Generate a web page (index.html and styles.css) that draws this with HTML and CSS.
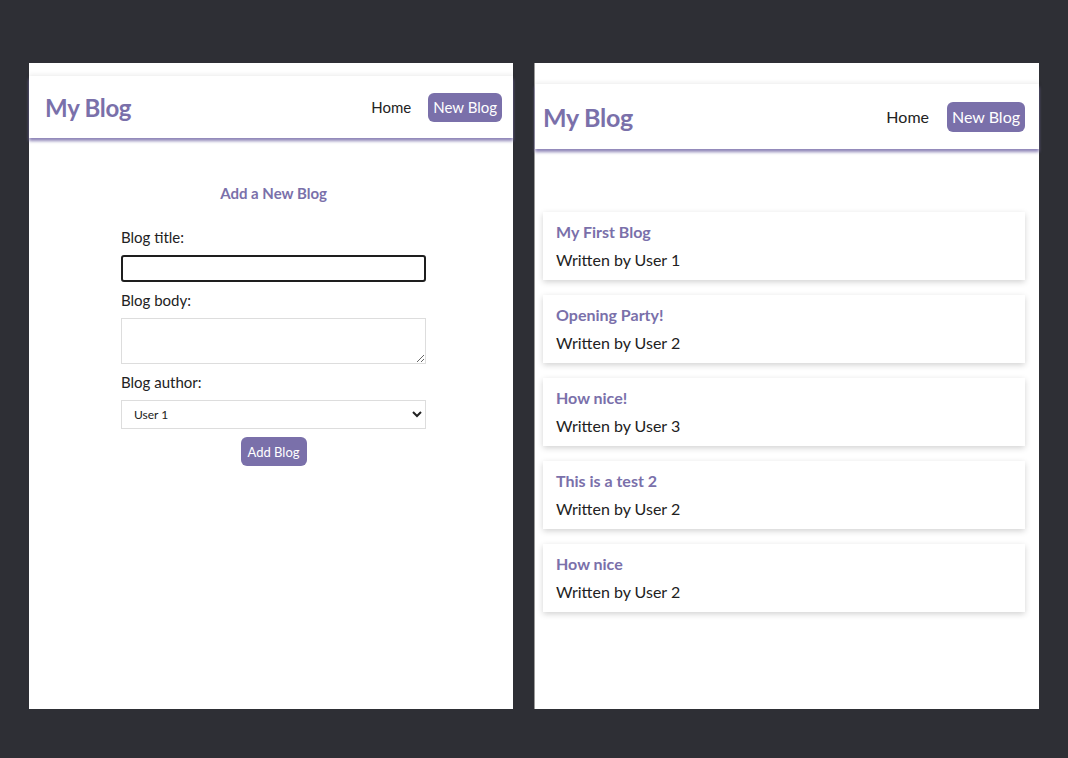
FILE: index.html
```html
<!DOCTYPE html>
<html lang="en">
<head>
<meta charset="utf-8">
<title>My Blog</title>
<link rel="stylesheet" href="styles.css">
</head>
<body>
<div class="stage">
  <section class="panel panel-left">
    <nav class="navbar navbar-sm">
      <h1 class="brand">My Blog</h1>
      <div class="links">
        <a class="link" href="#">Home</a>
        <a class="link link-btn" href="#">New Blog</a>
      </div>
    </nav>
    <div class="create">
      <h2 class="create-title">Add a New Blog</h2>
      <form class="form">
        <label class="label">Blog title:</label>
        <input class="field field-focus" type="text" autofocus>
        <label class="label">Blog body:</label>
        <textarea class="field field-area"></textarea>
        <label class="label">Blog author:</label>
        <select class="field field-select">
          <option>User 1</option>
          <option>User 2</option>
        </select>
        <button class="submit" type="button">Add Blog</button>
      </form>
    </div>
  </section>

  <section class="panel panel-right">
    <nav class="navbar navbar-lg">
      <h1 class="brand">My Blog</h1>
      <div class="links">
        <a class="link" href="#">Home</a>
        <a class="link link-btn" href="#">New Blog</a>
      </div>
    </nav>
    <div class="list">
      <article class="card"><h2 class="card-title">My First Blog</h2><p class="card-meta">Written by User 1</p></article>
      <article class="card"><h2 class="card-title">Opening Party!</h2><p class="card-meta">Written by User 2</p></article>
      <article class="card"><h2 class="card-title">How nice!</h2><p class="card-meta">Written by User 3</p></article>
      <article class="card"><h2 class="card-title">This is a test 2</h2><p class="card-meta">Written by User 2</p></article>
      <article class="card"><h2 class="card-title">How nice</h2><p class="card-meta">Written by User 2</p></article>
    </div>
  </section>
</div>
</body>
</html>
```

FILE: styles.css
```css
* { box-sizing: border-box; }

html, body {
  margin: 0;
  padding: 0;
}

body {
  background: #2e2f35;
  font-family: "Lato", "Open Sans", sans-serif;
  color: #222;
  width: 1068px;
  height: 758px;
  overflow: hidden;
}

.stage {
  display: flex;
  align-items: flex-start;
  padding: 63px 0 0 29px;
  gap: 21px;
}

.panel {
  background: #fff;
  height: 646px;
  display: flex;
  flex-direction: column;
}

.panel-left {
  width: 484px;
  padding-top: 13px;
}

.panel-right {
  width: 505px;
  padding: 21px 14px 0 8px;
  border-left: 1px solid #9a9a9a;
}

.navbar {
  display: flex;
  align-items: center;
  justify-content: space-between;
  background: #fff;
  box-shadow: 0 3px 3px rgba(122, 112, 170, 0.85), 0 -2px 4px rgba(0, 0, 0, 0.06);
}

.navbar-sm {
  height: 62px;
  padding: 0 11px 0 16px;
}

.navbar-lg {
  height: 65px;
  margin: 0 -14px 0 -8px;
  padding: 0 14px 0 8px;
}

.brand {
  margin: 0;
  color: #7a70aa;
  font-weight: 700;
  letter-spacing: -0.3px;
}

.navbar-sm .brand { font-size: 24px; }
.navbar-lg .brand { font-size: 25px; }

.links {
  display: flex;
  align-items: center;
}

.link {
  color: #222;
  text-decoration: none;
  border-radius: 6px;
}

.navbar-sm .link { font-size: 15px; margin-left: 17px; }
.navbar-lg .link { font-size: 16px; margin-left: 18px; }

.link-btn {
  background: #7a70aa;
  color: #fff;
  padding: 0 5px;
}

.navbar-sm .link-btn { height: 29px; line-height: 29px; }
.navbar-lg .link-btn { height: 30px; line-height: 30px; }

/* create form */
.create {
  padding: 45px 0 0 5px;
  display: flex;
  flex-direction: column;
  align-items: center;
}

.create-title {
  margin: 0;
  color: #7a70aa;
  font-size: 15px;
  font-weight: 700;
  line-height: 20px;
}

.form {
  width: 305px;
  margin-top: 24px;
  display: flex;
  flex-direction: column;
}

.label {
  font-size: 15px;
  line-height: 20px;
  margin-bottom: 8px;
}

.field {
  width: 100%;
  margin: 0 0 8px;
  font-family: inherit;
  background: #fff;
  border: 1px solid #ddd;
}

.field-focus {
  height: 27px;
  border: 2px solid #1e1e1e;
  border-radius: 3px;
  outline: none;
}

.field-area {
  height: 46px;
  resize: vertical;
}

.field-select {
  height: 29px;
  font-size: 12px;
  padding: 0 8px;
  color: #222;
}

.submit {
  align-self: center;
  height: 29px;
  background: #7a70aa;
  color: #fff;
  border: none;
  border-radius: 6px;
  font-family: inherit;
  font-size: 13px;
  padding: 0 7px;
}

/* list */
.list {
  padding-top: 63px;
  display: flex;
  flex-direction: column;
  gap: 15px;
}

.card {
  height: 68px;
  padding: 9px 13px;
  background: #fff;
  box-shadow: 0 2px 6px rgba(0, 0, 0, 0.18);
}

.card-title {
  margin: 0;
  color: #7a70aa;
  font-size: 16px;
  font-weight: 700;
  line-height: 22px;
}

.card-meta {
  margin: 6px 0 0;
  font-size: 16px;
  line-height: 22px;
}
```
